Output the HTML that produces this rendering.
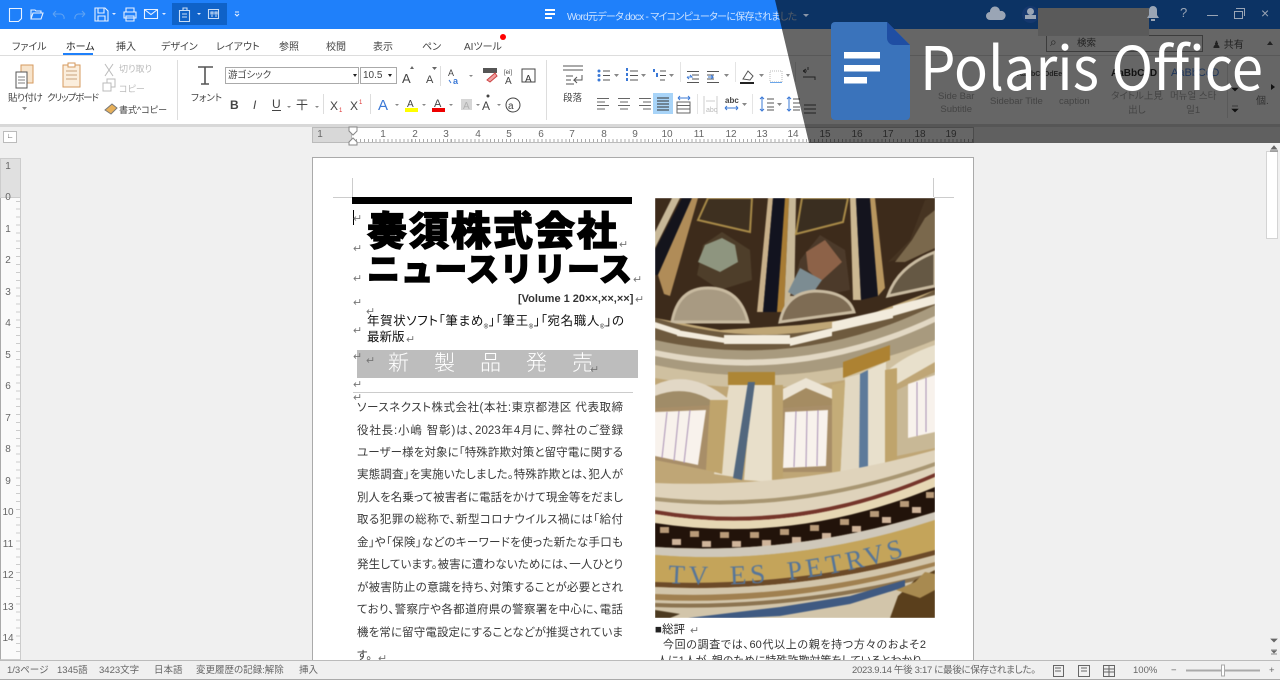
<!DOCTYPE html>
<html lang="ja"><head><meta charset="utf-8"><title>Word元データ.docx</title>
<style>
*{box-sizing:border-box}
html,body{margin:0;padding:0;width:1280px;height:688px;overflow:hidden;background:#fff;font-family:"Liberation Sans","Noto Sans CJK JP",sans-serif;color:#444;font-feature-settings:"palt"}
.a{position:absolute;white-space:nowrap}
#tabs span{position:absolute;top:38px;font-size:10px;color:#444;white-space:nowrap}
.r{font-size:9.5px;color:#444}
.l{position:absolute;left:357px;width:266px;font-size:11.5px;line-height:16px;height:16px;color:#3a3a3a;overflow:hidden;text-align:justify;text-align-last:justify}
.rn{position:absolute;top:129px;font-size:10px;color:#666;width:16px;text-align:center}
.vn{position:absolute;left:0;width:16px;font-size:10px;color:#666;text-align:center}
.pm{position:absolute;font-size:11px;color:#777;line-height:10px}
</style></head><body>
<!-- title bar -->
<div class="a" style="left:0;top:0;width:1280px;height:29px;background:#1f80fa"></div>
<div class="a" style="left:172px;top:3px;width:55px;height:22px;background:#0f62c8"></div>
<svg class="a" style="left:0;top:0" width="260" height="29" fill="none" stroke="#e8f1ff" stroke-width="1.1">
<path d="M9.500 8.500h12v10l-3 3h-9z"/>
<path d="M31 19V10h4l1 1h5v2M31 19l2-6h10l-2 6z"/>
<path d="M53 14l3-3M53 14l3 3M53 14h8a4 4 0 0 1 3 5" stroke="#5fa2f2"/>
<path d="M85 14l-3-3M85 14l-3 3M85 14h-7a4 4 0 0 0-3 5" stroke="#5fa2f2"/>
<path d="M95 8h10l3 3v10H95zM98 8v5h6V8M98 21v-5h7v5"/>
<path d="M126 12V8h8v4M124 12h12v6h-12zM126 16h8v5h-8z"/>
<path d="M144.500 9.500h13v9h-13zM144.500 9.500l6.500 5 6.500-5"/>
<path d="M179.500 10.500h10v11h-10zM183 10V8h4v2M182 14h5M182 17h5" stroke="#c8dcf5"/>
<path d="M208.500 9.500h10v9h-10zM211 12h2v2h-2zM215 12h2v2h-2zM211 16h2M215 16h2" stroke="#c8dcf5"/>
<path d="M235 12h4M235 14l2 2 2-2"/>
</svg>
<svg class="a" style="left:0;top:0" width="240" height="29" fill="#dfeaff"><path d="M112 13h4l-2 2zM162 13h4l-2 2zM197 13h4l-2 2z"/></svg>
<svg class="a" style="left:544px;top:9px" width="14" height="11" fill="#fff"><rect x="1" width="10" height="2"/><rect x="1" y="4" width="10" height="2"/><rect x="1" y="8" width="7" height="2"/></svg>
<div class="a" style="left:567px;top:8px;font-size:10px;color:#cfe3ff;letter-spacing:-.7px">Word元データ.docx - マイコンピューターに保存されました</div>
<!-- tabs -->
<div id="tabs">
<span style="left:12px">ファイル</span><span style="left:66px;color:#222">ホーム</span><span style="left:116px">挿入</span><span style="left:161px">デザイン</span><span style="left:216px">レイアウト</span><span style="left:279px">参照</span><span style="left:326px">校閲</span><span style="left:373px">表示</span><span style="left:422px">ペン</span><span style="left:464px">AIツール</span>
</div>
<div class="a" style="left:63px;top:53px;width:30px;height:2px;background:#1f80fa"></div>
<div class="a" style="left:500px;top:34px;width:6px;height:6px;border-radius:50%;background:#f00"></div>
<div class="a" style="left:0;top:55px;width:1280px;height:1px;background:#ddd"></div>
<!-- ribbon -->
<svg class="a" style="left:0;top:56px" width="830" height="68" fill="none" stroke="#555">
<g stroke="#d69a5e"><path d="M21 9h12v18h-12z" fill="#f7e4cc"/><path d="M63 9h17v22H63z" fill="#fbeedd"/><path d="M68 7h7v4h-7z" fill="#fff"/></g>
<path d="M16 16h11v16H16z" fill="#fff"/><path d="M18 21h7M18 24h7M18 27h7" stroke-width=".8"/>
<path d="M66 15h11M66 19h11M66 23h11" stroke="#c9a27c"/>
<g stroke="#bbb"><path d="M105 8l8 12M113 8l-8 12"/><path d="M103 27h8v8h-8zM107 27v-4h8v8h-4"/></g>
<path d="M105 54l7-6 5 4-6 6z" fill="#e7b05a" stroke="#777"/>
<path d="M177.500 4v60M546.500 4v60" stroke="#ddd"/>
<path d="M198 11h15M205 11v17M201 28h8" stroke-width="1.600"/>
<path d="M563 10h20M563 14h20M566 20h7M566 24h5M566 28h8M582 19v5h-8l3-3M574 24l3 3" stroke-width="1"/>
<!-- bullets -->
<g fill="#3a78d6" stroke="none"><circle cx="599" cy="15" r="1.500"/><circle cx="599" cy="19.500" r="1.500"/><circle cx="599" cy="24" r="1.500"/><rect x="626" y="12" width="2" height="3"/><rect x="626" y="17" width="2" height="3"/><rect x="626" y="22" width="2" height="3"/><rect x="653" y="13" width="2" height="3"/><rect x="656" y="17" width="2" height="4"/></g>
<path d="M603 15h7M603 19.500h7M603 24h7M630 15h8M630 19.500h8M630 24h8M660 15h6M660 19.500h6M660 24h5"/>
<g fill="#888" stroke="none"><path d="M614 18h5l-2.500 3zM641 18h5l-2.500 3zM669 18h5l-2.500 3zM724 18h5l-2.500 3zM759 18h5l-2.500 3zM786 18h4l-2 3zM742 47h5l-2.500 3zM777 47h5l-2.500 3z"/></g>
<path d="M687 15.500h12M692 19h7M692 23h7M687 26.500h12M707 15.500h12M707 19h7M707 23h7M707 26.500h12"/>
<path d="M687 21h5l-2-2M687 21l2 2" stroke="#3a78d6" /><path d="M708 21h5l-2-2M713 21l-2 2" stroke="#3a78d6"/>
<path d="M743 23l5-8 5 5-3 4z"/><rect x="740" y="26" width="14" height="2" fill="#222" stroke="none"/>
<path d="M770 15h12v11h-12z" stroke="#bbb" stroke-dasharray="1 1"/><path d="M770 26.500h12" stroke="#6aa6ea"/>
<path d="M680.500 6v20M735.500 6v20M795.500 6v20" stroke="#e4e4e4"/>
<path d="M597 42.500h12M597 46h8M597 49.500h12M597 53h8M618 42.500h12M620 46h8M618 49.500h12M620 53h8M639 42.500h12M643 46h8M639 49.500h12M643 53h8" stroke="#666"/>
<rect x="653" y="37" width="20" height="21" fill="#a8d4f8" stroke="none"/>
<path d="M657 42h12M657 45h12M657 48h12M657 51h12M657 54h12" stroke="#333"/>
<path d="M677 46h13v11h-13zM677 49.500h13M677 53h13" stroke="#666"/><path d="M678 42h12M678 42l2-2M678 42l2 2M690 42l-2-2M690 42l-2 2" stroke="#3a78d6"/>
<path d="M697.500 38v20M752.500 38v20" stroke="#e4e4e4"/>
<path d="M704 40v18M717 40v18M706 45h9" stroke="#ccc"/>
<text x="706" y="56" font-size="7" font-family="Liberation Sans" fill="#bbb" stroke="none">abc</text>
<text x="725" y="47" font-size="8" font-weight="700" font-family="Liberation Sans" fill="#444" stroke="none">abc</text>
<path d="M725 52h13M725 52l2-2M725 52l2 2M738 52l-2-2M738 52l-2 2" stroke="#3a78d6"/>
<path d="M762 41v14M760 43l2-2 2 2M760 53l2 2 2-2" stroke="#3a78d6"/><path d="M767 43h7M767 47h7M767 51h7M767 54h7"/>
<path d="M789 41v14M787 43l2-2 2 2M787 53l2 2 2-2" stroke="#3a78d6"/><path d="M793 43h7M793 47h7M793 51h7M793 54h7"/>
</svg>
<svg class="a" style="left:225px;top:60px" width="320" height="60">
<path d="M128 14h4l-2 3zM163 14h4l-2 3z" fill="#222"/>
<g font-family="Liberation Sans" fill="#444">
<text x="177" y="23" font-size="13">A</text><text x="201" y="23" font-size="11">A</text>
<path d="M185 9l2-3 2 3zM207 7h5l-2.500 3z" fill="#666"/>
<text x="223" y="16" font-size="9">A</text><text x="228" y="24" font-size="9" fill="#3a78d6" font-weight="700">a</text>
<path d="M224 20l2 3" stroke="#3a78d6" fill="none"/>
<text x="279" y="14" font-size="6">[ei]</text><text x="280" y="24" font-size="10">A</text>
<text x="300" y="22" font-size="10" fill="#333">A</text>
<text x="5" y="49" font-size="12" font-weight="700">B</text><text x="28" y="49" font-size="12" font-style="italic">I</text><text x="47" y="48" font-size="12">U</text><path d="M47 50h9v1h-9z"/><text x="71" y="49" font-size="12" font-family="Noto Sans CJK JP">干</text>
<text x="105" y="50" font-size="12">X</text><text x="114" y="52" font-size="6" fill="#d33">1</text>
<text x="125" y="50" font-size="12">X</text><text x="134" y="44" font-size="6" fill="#d33">1</text>
<text x="153" y="50" font-size="15" fill="#3a78d6">A</text>
<text x="182" y="47" font-size="10">A</text><text x="209" y="47" font-size="11">A</text>
<text x="238" y="49" font-size="10">A</text><text x="257" y="50" font-size="12">A</text>
<circle cx="263" cy="36" r="1.500"/>
<circle cx="288" cy="45" r="7" fill="none" stroke="#444"/><text x="283" y="49" font-size="10">a</text></g>
<rect x="180" y="48" width="13" height="4" fill="#ff0"/><rect x="207" y="48" width="13" height="4" fill="#e00"/>
<rect x="236" y="39" width="11" height="11" fill="#ccc" opacity=".8"/>
<rect x="297" y="9" width="13" height="13" fill="none" stroke="#444"/>
<rect x="258" y="8" width="14" height="5" fill="#555"/><path d="M262 20l8-7 2 3-7 6z" fill="#f0a0a0" stroke="#c44"/>
<path d="M215.500 6v20M98.500 34v20M145.500 34v20" stroke="#ddd"/>
<g fill="#888"><path d="M62 46h4l-2 2zM90 46h4l-2 2zM170 44h4l-2 2zM197 44h4l-2 2zM224 44h4l-2 2zM251 44h4l-2 2zM272 44h4l-2 2zM244 15h4l-2 2z"/></g>
</svg>
<svg class="a" style="left:0;top:56px" width="60" height="60"><path d="M22 51h5l-2.500 3z" fill="#888"/></svg>
<div class="a r" style="left:8px;top:90px;letter-spacing:-.5px">貼り付け</div>
<div class="a r" style="left:47px;top:90px;letter-spacing:-1.1px">クリップボード</div>
<div class="a r" style="left:119px;top:62px;color:#bbb;font-size:9px">切り取り</div>
<div class="a r" style="left:119px;top:82px;color:#bbb;font-size:9px">コピー</div>
<div class="a r" style="left:119px;top:103px;font-size:9px">書式^コピー</div>
<div class="a r" style="left:191px;top:90px">フォント</div>
<div class="a" style="left:225px;top:67px;width:134px;height:17px;border:1px solid #aaa;font-size:9.5px;padding:2px 2px;line-height:12px">游ゴシック</div>
<div class="a" style="left:360px;top:67px;width:37px;height:17px;border:1px solid #aaa;font-size:10px;padding:2px 2px;line-height:12px">10.5</div>
<div class="a r" style="left:563px;top:90px">段落</div>
<!-- ruler band -->
<div class="a" style="left:0;top:124px;width:1280px;height:536px;background:#f0f0f0"></div>
<div class="a" style="left:0;top:124px;width:1280px;height:3px;background:#d8d8d8"></div>
<div class="a" style="left:3px;top:131px;width:14px;height:12px;background:#fff;border:1px solid #bbb;font-size:7px;line-height:10px;text-align:center">∟</div>
<div class="a" style="left:312px;top:127px;width:662px;height:16px;background:#fff;border:1px solid #bbb"></div>
<div class="a" style="left:312px;top:127px;width:40px;height:16px;background:#d8d8d8;border:1px solid #bbb"></div>
<div class="a" style="left:352px;top:139px;width:622px;height:3px;background:repeating-linear-gradient(90deg,#aaa 0,#aaa 1px,transparent 1px,transparent 3.95px)"></div>
<span class="rn" style="left:312px">1</span><span class="rn" style="left:375px">1</span><span class="rn" style="left:407px">2</span><span class="rn" style="left:438px">3</span><span class="rn" style="left:470px">4</span><span class="rn" style="left:501px">5</span><span class="rn" style="left:533px">6</span><span class="rn" style="left:564px">7</span><span class="rn" style="left:596px">8</span><span class="rn" style="left:627px">9</span><span class="rn" style="left:659px">10</span><span class="rn" style="left:691px">11</span><span class="rn" style="left:723px">12</span><span class="rn" style="left:754px">13</span><span class="rn" style="left:785px">14</span><span class="rn" style="left:817px">15</span><span class="rn" style="left:849px">16</span><span class="rn" style="left:880px">17</span><span class="rn" style="left:912px">18</span><span class="rn" style="left:943px">19</span>
<svg class="a" style="left:347px;top:126px" width="12" height="20"><path d="M2 1h8v4l-4 4-4-4zM2 19v-3l4-4 4 4v3z" fill="#fff" stroke="#888"/></svg>
<!-- vertical ruler -->
<div class="a" style="left:0;top:158px;width:21px;height:502px;background:#fafafa;border:1px solid #ccc;border-left:1px solid #aaa"></div>
<div class="a" style="left:0;top:158px;width:21px;height:40px;background:#e0e0e0;border:1px solid #ccc"></div>
<div class="a" style="left:16px;top:198px;width:4px;height:462px;background:repeating-linear-gradient(0deg,#ccc 0,#ccc 1px,transparent 1px,transparent 7.9px)"></div>
<span class="vn" style="top:161px">1</span><span class="vn" style="top:192px">0</span><span class="vn" style="top:224px">1</span><span class="vn" style="top:255px">2</span><span class="vn" style="top:287px">3</span><span class="vn" style="top:318px">4</span><span class="vn" style="top:350px">5</span><span class="vn" style="top:381px">6</span><span class="vn" style="top:413px">7</span><span class="vn" style="top:444px">8</span><span class="vn" style="top:476px">9</span><span class="vn" style="top:507px">10</span><span class="vn" style="top:539px">11</span><span class="vn" style="top:570px">12</span><span class="vn" style="top:602px">13</span><span class="vn" style="top:633px">14</span>
<!-- scroll -->
<div class="a" style="left:1266px;top:151px;width:12px;height:88px;background:#fff;border:1px solid #d4d4d4"></div>
<svg class="a" style="left:1268px;top:142px" width="10" height="10"><path d="M2 9h8M3.500 7L6 4l2.500 3z" fill="#666" stroke="#666"/></svg>
<svg class="a" style="left:1268px;top:634px" width="10" height="22" fill="#666"><path d="M3 5h6l-3 3zM3 16h6M3 20h6M4 17h4l-2 2z" stroke="#666" stroke-width=".7"/></svg>
<!-- page -->
<div class="a" style="left:312px;top:157px;width:662px;height:503px;background:#fff;border:1px solid #aaa;border-bottom:0"></div>
<svg class="a" style="left:330px;top:176px" width="630" height="30" stroke="#ccc" fill="none"><path d="M22.500 2v19M3 21.500h19.500M603.500 2v19M604 21.500h20"/></svg>
<div class="a" style="left:352px;top:197px;width:280px;height:7px;background:#000"></div>
<div class="a" style="left:353px;top:210px;width:1px;height:15px;background:#000"></div>
<div class="a" style="left:367px;top:209px;font-size:40px;line-height:46px;font-weight:900;color:#000;letter-spacing:2px;-webkit-text-stroke:1.2px #000;font-feature-settings:normal">奏須株式会社</div>
<div class="a" style="left:367px;top:250px;font-size:33px;line-height:40px;font-weight:900;color:#000;letter-spacing:.6px;-webkit-text-stroke:1.2px #000;font-feature-settings:normal">ニュースリリース</div>
<div class="a" style="left:518px;top:292px;font-size:11px;font-weight:700;color:#333;line-height:14px">[Volume 1 20××,××,××]</div>
<div class="a" style="left:367px;top:313px;width:257px;font-size:12.5px;color:#111;line-height:16px;text-align:justify;text-align-last:justify;white-space:normal;height:16px;overflow:hidden">年賀状ソフト「筆まめ<sub style="font-size:6px;line-height:0">®</sub>」「筆王<sub style="font-size:6px;line-height:0">®</sub>」「宛名職人<sub style="font-size:6px;line-height:0">®</sub>」の</div>
<div class="a" style="left:367px;top:329px;font-size:12.5px;color:#111;line-height:16px">最新版</div>
<div class="a" style="left:357px;top:350px;width:281px;height:28px;background:#bdbdbd"></div>
<div class="a" style="left:388px;top:350px;font-size:21px;line-height:28px;color:#fff;letter-spacing:25px;font-weight:300;font-feature-settings:normal">新製品発売</div>
<div class="a" style="left:353px;top:392px;width:280px;height:1px;background:#ccc"></div>
<div class="l" style="top:400px">ソースネクスト株式会社(本社:東京都港区 代表取締</div>
<div class="l" style="top:423px">役社長:小嶋 智彰)は、2023年4月に、弊社のご登録</div>
<div class="l" style="top:445px">ユーザー様を対象に「特殊詐欺対策と留守電に関する</div>
<div class="l" style="top:467px">実態調査」を実施いたしました。特殊詐欺とは、犯人が</div>
<div class="l" style="top:490px">別人を名乗って被害者に電話をかけて現金等をだまし</div>
<div class="l" style="top:512px">取る犯罪の総称で、新型コロナウイルス禍には「給付</div>
<div class="l" style="top:535px">金」や「保険」などのキーワードを使った新たな手口も</div>
<div class="l" style="top:557px">発生しています。被害に遭わないためには、一人ひとり</div>
<div class="l" style="top:580px">が被害防止の意識を持ち、対策することが必要とされ</div>
<div class="l" style="top:602px">ており、警察庁や各都道府県の警察署を中心に、電話</div>
<div class="l" style="top:625px">機を常に留守電設定にすることなどが推奨されていま</div>
<div class="l" style="top:648px;width:auto;text-align-last:left;height:12px">す。</div>
<!-- paragraph marks -->
<span class="pm" style="left:353px;top:214px">↵</span><span class="pm" style="left:353px;top:244px">↵</span><span class="pm" style="left:353px;top:274px">↵</span><span class="pm" style="left:353px;top:298px">↵</span><span class="pm" style="left:353px;top:326px">↵</span><span class="pm" style="left:353px;top:352px">↵</span><span class="pm" style="left:353px;top:380px">↵</span><span class="pm" style="left:353px;top:393px">↵</span><span class="pm" style="left:619px;top:240px">↵</span><span class="pm" style="left:633px;top:275px">↵</span><span class="pm" style="left:635px;top:295px">↵</span><span class="pm" style="left:366px;top:307px">↵</span><span class="pm" style="left:406px;top:335px">↵</span><span class="pm" style="left:366px;top:356px">↵</span><span class="pm" style="left:590px;top:365px">↵</span><span class="pm" style="left:378px;top:654px">↵</span><span class="pm" style="left:690px;top:626px">↵</span>
<!-- photo -->
<div class="a" style="left:655px;top:198px;width:280px;height:420px;overflow:hidden">
<svg style="display:block;filter:blur(.6px)" width="280" height="420" viewBox="655 198 280 420">
<rect x="655" y="198" width="280" height="420" fill="#bfa676"/>
<!-- vault -->
<polygon points="655,198 935,198 935,290 860,318 800,325 720,330 655,318" fill="#3d2b1b"/>
<polygon points="655,232 672,198 680,198 655,248" fill="#c8b898"/>
<polygon points="655,250 682,198 692,198 658,275 655,275" fill="#14141c"/>
<polygon points="658,275 692,198 698,198 670,296 664,294" fill="#b08c58"/>
<polygon points="757,312 768,198 773,198 763,312" fill="#c8b08a"/>
<polygon points="763,312 773,198 785,198 777,312" fill="#12131f"/>
<polygon points="777,312 785,198 789,198 784,312" fill="#a87c34"/>
<polygon points="784,312 789,198 796,198 794,312" fill="#c8b898"/>
<polygon points="850,198 856,198 861,300 853,300" fill="#ccb892"/>
<polygon points="856,198 870,198 878,296 861,300" fill="#14141e"/>
<polygon points="870,198 875,198 885,288 878,296" fill="#b8965f"/>
<polygon points="708,198 752,198 750,232 698,220" fill="#3e3020" stroke="#a88a48" stroke-width="2"/>
<polygon points="802,198 848,198 843,222 796,234" fill="#3a2e20" stroke="#a88a48" stroke-width="2"/>
<polygon points="697,275 703,245 722,232 750,250 752,280 720,290" fill="#4e3e2a"/>
<polygon points="698,262 705,245 722,238 735,245 738,262 720,272" fill="#8e957f"/>
<polygon points="790,296 800,260 820,235 845,250 850,290 820,296" fill="#4c3a2a"/>
<polygon points="806,252 825,240 842,262 820,282 808,270" fill="#8d6248"/>
<polygon points="788,292 800,268 822,280 815,290 795,296" fill="#7c8c92"/>
<polygon points="888,262 910,240 925,200 935,198 935,250" fill="#463422"/>
<polygon points="895,262 912,240 925,218 935,210 935,248 905,262" fill="#7a684c"/>
<!-- lunettes -->
<path d="M672 322Q678 288 708 288Q740 288 748 322Z" fill="#a89a82" stroke="#c8baa0" stroke-width="3"/>
<path d="M780 322Q786 292 816 291Q848 292 854 312Z" fill="#7e6c54" stroke="#c8baa0" stroke-width="3"/>
<path d="M888 296Q898 266 935 252V286Z" fill="#655844" stroke="#c8baa0" stroke-width="3"/>
<!-- cornice -->
<path d="M655 318Q800 362 935 290V312Q800 385 655 345Z" fill="#6e5a3e"/>
<polygon points="655,322 680,330 680,336 655,328" fill="#f2ebdc"/>
<polygon points="677,330 725,338 725,343 677,336" fill="#f2ebdc"/>
<polygon points="724,335 790,335 790,344 724,344" fill="#f2ebdc"/>
<polygon points="790,338 832,328 832,336 790,346" fill="#f2ebdc"/>
<polygon points="832,322 893,308 893,318 832,332" fill="#f2ebdc"/>
<polygon points="893,306 935,295 935,304 893,316" fill="#f2ebdc"/>
<path d="M655 340Q800 372 935 305V340Q800 395 655 365Z" fill="#a89a7e"/>
<path d="M655 350Q800 380 935 316V322Q800 386 655 356Z" fill="#e2d8c4"/>
<path d="M655 365Q800 395 935 340V356Q800 405 655 378Z" fill="#cfc0a0"/>
<!-- pediments -->
<path d="M655 385Q690 368 730 400L728 408H655Z" fill="#e2d8c6"/>
<path d="M655 396Q690 382 722 408H655Z" fill="#a08c68"/>
<polygon points="770,395 806,378 845,395 840,405 775,408" fill="#ece4d4"/>
<polygon points="780,402 806,388 835,400 832,412 782,412" fill="#a58c62"/>
<path d="M886 372Q905 355 935 345V362L895 385Z" fill="#e8e0cc"/>
<!-- capitals -->
<polygon points="728,372 775,372 775,385 728,385" fill="#ad8636"/>
<polygon points="843,362 890,345 890,360 843,378" fill="#ad8232"/>
<!-- columns -->
<polygon points="729,385 750,385 742,478 714,474" fill="#e6dcc6"/>
<polygon points="752,385 773,385 773,482 744,480" fill="#e8dfca"/>
<polygon points="748,382 755,382 742,480 733,478" fill="#52677e"/>
<polygon points="845,378 860,374 860,476 840,480" fill="#e2d8c2"/>
<polygon points="868,370 886,362 885,468 867,474" fill="#e8e0cc"/>
<polygon points="860,374 868,370 868,474 859,476" fill="#5d7a9a"/>
<!-- windows -->
<polygon points="655,408 715,405 706,470 655,460" fill="#a88e68"/>
<polygon points="655,412 706,410 698,465 655,456" fill="#f8f2ec"/>
<path d="M667 412l-5 46M679 411l-5 50M690 410l-6 53" stroke="#a890b4" fill="none"/>
<polygon points="778,408 832,405 832,472 778,472" fill="#a88e68"/>
<polygon points="785,412 828,410 826,466 783,468" fill="#f8f2ec"/>
<path d="M796 411l-2 56M807 411l-1 56M818 410l-1 56" stroke="#a890b4" fill="none"/>
<polygon points="897,390 935,372 935,448 897,456" fill="#c8b896"/>
<polygon points="908,384 935,375 935,432 908,438" fill="#f8f2ec"/>
<path d="M917 382v54M926 378v54" stroke="#a890b4" fill="none"/>
<polygon points="710,400 728,400 722,474 706,470" fill="#bfa46c"/>
<polygon points="772,385 783,385 783,478 772,480" fill="#bda36e"/>
<polygon points="832,385 845,382 840,480 832,478" fill="#c4ac78"/>
<polygon points="885,370 897,368 897,462 885,466" fill="#bfa46c"/>
<!-- bands -->
<path d="M655 483Q795 489 935 450V480Q795 540 655 515Z" fill="#dfd3bb"/>
<path d="M655 497Q795 512 935 462V466Q795 516 655 501Z" fill="#a89672"/>
<path d="M655 510Q795 534 935 473V477Q795 538 655 514Z" fill="#75352a"/>
<path d="M655 514Q795 538 935 477V490Q795 552 655 526Z" fill="#e6d7b4"/>
<path d="M655 523Q795 545 935 487V512Q795 556 655 547Z" fill="#22130a"/>
<g fill="#b89a78">
<rect x="660" y="527" width="9" height="6"/><rect x="690" y="531" width="9" height="6"/><rect x="720" y="532" width="9" height="6"/><rect x="750" y="532" width="9" height="6"/><rect x="780" y="529" width="9" height="6"/><rect x="810" y="525" width="9" height="6"/><rect x="840" y="519" width="9" height="6"/><rect x="870" y="511" width="9" height="6"/><rect x="900" y="501" width="9" height="6"/><rect x="926" y="492" width="8" height="6"/></g>
<g fill="#cfb49a">
<rect x="672" y="539" width="9" height="6"/><rect x="702" y="541" width="9" height="6"/><rect x="732" y="541" width="9" height="6"/><rect x="762" y="540" width="9" height="6"/><rect x="792" y="537" width="9" height="6"/><rect x="822" y="533" width="9" height="6"/><rect x="852" y="526" width="9" height="6"/><rect x="882" y="517" width="9" height="6"/><rect x="912" y="507" width="9" height="6"/></g>
<path d="M655 547Q795 556 935 512V520Q795 566 655 555Z" fill="#cfc8ba"/>
<path d="M655 555Q795 566 935 520V550Q795 588 655 582Z" fill="#c4a45a"/>
<path d="M655 582Q795 588 935 550V555Q795 594 655 587Z" fill="#6c4a28"/>
<path d="M655 587Q795 594 935 555V618H655Z" fill="#d2c5aa"/>
<path d="M655 594Q795 600 935 562V566Q795 606 655 600Z" fill="#a08050"/>
<path d="M655 603Q795 608 935 572V576Q795 612 655 607Z" fill="#8c7450"/>
<polygon points="688,618 780,607 850,596 905,580 905,587 850,604 780,616 740,618" fill="#3f5a82"/>
<polygon points="890,618 898,596 915,580 935,570 935,618" fill="#5a3f1c"/>
<polygon points="896,590 915,582 925,572 935,574 935,590 920,598" fill="#a88a50"/>
<polygon points="655,610 680,614 670,618 655,618" fill="#4c3a20"/>
<path id="ins" d="M668 583Q800 592 930 548" fill="none"/>
<text font-family="Liberation Serif" font-size="27" fill="#55759a" letter-spacing="4" word-spacing="8"><textPath href="#ins">TV ES PETRVS</textPath></text>
</svg>
</div>
<!-- right col text -->
<div class="a" style="left:655px;top:623px;font-size:11.5px;color:#222;line-height:14px">■総評</div>
<div class="a" style="left:663px;top:638px;width:263px;font-size:11px;color:#333;line-height:14px;text-align:justify;text-align-last:justify;white-space:normal;height:14px;overflow:hidden">今回の調査では、60代以上の親を持つ方々のおよそ2</div>
<div class="a" style="left:657px;top:654px;width:275px;height:6px;overflow:hidden;font-size:11px;color:#333;line-height:14px">人に1人が、親のために特殊詐欺対策をしているとわかり</div>
<!-- status bar -->
<div class="a" style="left:0;top:660px;width:1280px;height:20px;background:#f0f0f0;border-top:1px solid #bbb;border-bottom:1px solid #aaa"></div>
<div class="a" style="left:0;top:680px;width:1280px;height:8px;background:#fff"></div>
<div style="position:absolute;left:0;top:664px;font-size:9.5px;color:#666;line-height:13px">
<span class="a" style="left:7px">1/3ページ</span><span class="a" style="left:57px">1345語</span><span class="a" style="left:99px">3423文字</span><span class="a" style="left:154px">日本語</span><span class="a" style="left:196px">変更履歴の記録:解除</span><span class="a" style="left:299px">挿入</span>
<span class="a" style="left:852px;letter-spacing:-.3px">2023.9.14 午後 3:17 に最後に保存されました。</span>
<span class="a" style="left:1133px">100%</span><span class="a" style="left:1171px">−</span><span class="a" style="left:1269px">+</span>
</div>
<svg class="a" style="left:1050px;top:664px" width="212" height="14" fill="none" stroke="#666"><path d="M3.500 1.500h10v11h-10zM5 4h6M5 7h6M28.500 1.500h11v11h-11zM31 4h6M31 7h6M53.500 1.500h11v11h-11zM59 1v11M54 5h10M54 8h10"/><path d="M136 6.500h74" stroke="#aaa" stroke-width="2"/><rect x="171.500" y="1" width="3" height="11" fill="#fff" stroke="#aaa"/></svg>
<!-- dim overlay -->
<div class="a" style="left:0;top:0;width:1280px;height:143px;background:#000;opacity:.6;clip-path:polygon(775px 0,1280px 0,1280px 143px,809px 143px)"></div>
<!-- dimmed content -->
<div class="a" style="left:803px;top:14px;width:0;height:0;border-top:3px solid #8a96a8;border-left:3px solid transparent;border-right:3px solid transparent"></div>
<svg class="a" style="left:803px;top:66px" width="16" height="50" fill="none" stroke="#1f2a3a"><path d="M0 5l4 0M0 5l3-2M0 5l3 2M5 1v3M0 11h12v3M1 39h12M1 43h12M1 47h12" stroke="#222"/></svg>
<div class="a" style="left:1046px;top:35px;width:157px;height:17px;border:1px solid #3c3c3c;font-size:9.5px;color:#222;padding:1px 30px;line-height:14px"><span style="position:absolute;left:3px;top:-1px;font-size:12px;color:#222">⌕</span>検索</div>
<div class="a" style="left:1212px;top:36px;font-size:10px;color:#222">♟ 共有</div>
<div class="a" style="left:1267px;top:41px;width:0;height:0;border-bottom:4px solid #222;border-left:3px solid transparent;border-right:3px solid transparent"></div>
<svg class="a" style="left:986px;top:6px" width="20" height="16" fill="#9aa5b5"><path d="M4 14a4 4 0 0 1 0-8 5 5 0 0 1 10-1 4 4 0 0 1 2 9z"/></svg>
<div class="a" style="left:1022px;top:6px;width:17px;height:17px;border-radius:50%;background:#15386e"></div>
<div class="a" style="left:1027px;top:8px;width:7px;height:7px;border-radius:50%;background:#9aa5b5"></div>
<div class="a" style="left:1025px;top:15px;width:11px;height:4px;background:#9aa5b5"></div>
<div class="a" style="left:1038px;top:8px;width:111px;height:28px;background:#5a5a5a"></div>
<svg class="a" style="left:1147px;top:6px" width="12" height="15" fill="#9aa5b5"><path d="M6 0a4 4 0 0 1 4 4v5l2 3H0l2-3V4a4 4 0 0 1 4-4zM4 13h4v2H4z"/></svg>
<div class="a" style="left:1180px;top:5px;font-size:13px;color:#9aa5b5">?</div>
<div class="a" style="left:1207px;top:15px;width:11px;height:1px;background:#9aa5b5"></div>
<div class="a" style="left:1234px;top:11px;width:9px;height:8px;border:1px solid #9aa5b5"></div>
<div class="a" style="left:1236px;top:8px;width:9px;height:8px;border:1px solid #9aa5b5;border-left:0;border-bottom:0"></div>
<div class="a" style="left:1261px;top:5px;font-size:14px;color:#9aa5b5">×</div>
<div class="a" style="left:1017px;top:71px;font-size:7px;color:#222;font-weight:700">AaBbCcDdEe</div>
<div class="a" style="left:1111px;top:68px;font-size:10px;color:#111;font-weight:700">AaBbCcD</div>
<div class="a" style="left:1171px;top:67px;font-size:11px;color:#1c3358">AaBbCcD</div>
<div class="a" style="left:938px;top:90px;font-size:9.5px;color:#444;text-align:center;line-height:13px">Side Bar<br>Subtitle</div>
<div class="a" style="left:990px;top:96px;font-size:9.5px;color:#444">Sidebar Title</div>
<div class="a" style="left:1059px;top:96px;font-size:9.5px;color:#444">caption</div>
<div class="a" style="left:1111px;top:90px;font-size:9.5px;color:#444;text-align:center;line-height:14px">タイトル上見<br>出し</div>
<div class="a" style="left:1170px;top:90px;font-size:9.5px;color:#444;text-align:center;line-height:14px;font-family:'Liberation Sans','Noto Sans CJK KR',sans-serif">머뉴얼 스타<br>일1</div>
<div class="a" style="left:1256px;top:92px;font-size:10px;color:#333">個.</div>
<div class="a" style="left:1271px;top:84px;width:0;height:0;border-left:4px solid #111;border-top:3px solid transparent;border-bottom:3px solid transparent"></div>
<div class="a" style="left:1227px;top:56px;width:1px;height:62px;background:#5a5a5a"></div>
<svg class="a" style="left:1228px;top:84px" width="12" height="30" fill="#111"><path d="M4 4h6l-3 3zM4 22h6M4 25h6l-3 3z" stroke="#111" stroke-width=".6"/></svg>
<!-- logo -->
<svg class="a" style="left:831px;top:22px" width="79" height="98"><path d="M4 0h52l23 23v71a4 4 0 0 1-4 4H4a4 4 0 0 1-4-4V4a4 4 0 0 1 4-4z" fill="#3a73bb"/><path d="M56 0l23 23H63a7 7 0 0 1-7-7z" fill="#1f4ea3"/><rect x="13" y="30" width="36" height="6.500" fill="#fff"/><rect x="13" y="43" width="36" height="6.500" fill="#fff"/><rect x="13" y="55" width="23" height="6.500" fill="#fff"/></svg>
<svg class="a" style="left:915px;top:30px;overflow:visible" width="360" height="80"><text x="5" y="60" font-family="'Noto Sans CJK JP',sans-serif" font-size="60" fill="#fff" textLength="343" lengthAdjust="spacingAndGlyphs" style="font-weight:400;font-feature-settings:normal">Polaris Office</text></svg>
</body></html>
